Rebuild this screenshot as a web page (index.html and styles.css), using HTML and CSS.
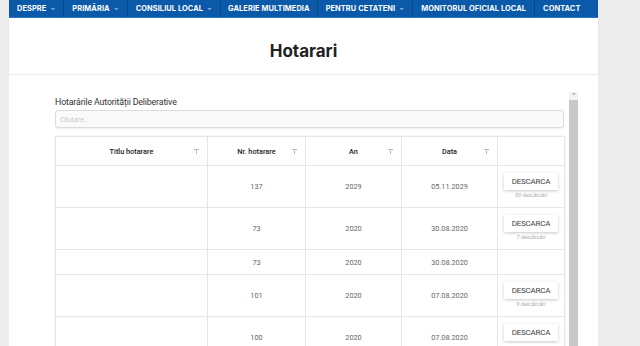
FILE: index.html
```html
<!DOCTYPE html>
<html lang="ro">
<head>
  <meta charset="UTF-8">
  <meta name="viewport" content="width=device-width, initial-scale=1.0">
  <title>Hotarari</title>
  <link rel="stylesheet" href="styles.css">
</head>
<body>
  <div class="page">
    <nav class="topnav">
      <a href="#" class="nav-item">DESPRE <span class="caret">&#8964;</span></a>
      <a href="#" class="nav-item">PRIMĂRIA <span class="caret">&#8964;</span></a>
      <a href="#" class="nav-item">CONSILIUL LOCAL <span class="caret">&#8964;</span></a>
      <a href="#" class="nav-item">GALERIE MULTIMEDIA</a>
      <a href="#" class="nav-item">PENTRU CETATENI <span class="caret">&#8964;</span></a>
      <a href="#" class="nav-item">MONITORUL OFICIAL LOCAL</a>
      <a href="#" class="nav-item">CONTACT</a>
    </nav>

    <header class="page-head">
      <h1>Hotarari</h1>
    </header>

    <section class="content">
      <div class="panel">
        <div class="panel-title">Hotarârile Autorității Deliberative</div>
        <input class="search" type="text" placeholder="Căutare...">

        <table class="hot-table">
          <thead>
            <tr>
              <th class="c-title">Titlu hotarare <span class="filter"></span></th>
              <th class="c-nr">Nr. hotarare <span class="filter"></span></th>
              <th class="c-an">An <span class="filter"></span></th>
              <th class="c-data">Data <span class="filter"></span></th>
              <th class="c-dl"></th>
            </tr>
          </thead>
          <tbody>
            <tr>
              <td></td><td>137</td><td>2029</td><td>05.11.2029</td>
              <td class="c-dl"><button class="dl-btn">DESCARCA</button><div class="dl-count">59 descărcări</div></td>
            </tr>
            <tr>
              <td></td><td>73</td><td>2020</td><td>30.08.2020</td>
              <td class="c-dl"><button class="dl-btn">DESCARCA</button><div class="dl-count">7 descărcări</div></td>
            </tr>
            <tr class="short">
              <td></td><td>73</td><td>2020</td><td>30.08.2020</td>
              <td class="c-dl"></td>
            </tr>
            <tr>
              <td></td><td>101</td><td>2020</td><td>07.08.2020</td>
              <td class="c-dl"><button class="dl-btn">DESCARCA</button><div class="dl-count">9 descărcări</div></td>
            </tr>
            <tr>
              <td></td><td>100</td><td>2020</td><td>07.08.2020</td>
              <td class="c-dl"><button class="dl-btn">DESCARCA</button></td>
            </tr>
          </tbody>
        </table>
      </div>
      <div class="scrollbar">
        <div class="scroll-arrow">&#8963;</div>
        <div class="scroll-thumb"></div>
      </div>
    </section>
  </div>
</body>
</html>
```

FILE: styles.css
```css
* {
  margin: 0;
  padding: 0;
  box-sizing: border-box;
}

body {
  font-family: "Roboto", "Liberation Sans", sans-serif;
  background-color: #ececec;
  height: 346px;
  overflow: hidden;
  color: #333;
}

.page {
  width: 589px;
  margin-left: 9px;
  background-color: #fff;
  min-height: 346px;
}

/* top navigation */
.topnav {
  display: flex;
  height: 18px;
  background-color: #0b5aa9;
  border-bottom: 1px solid #2a75c2;
}

.nav-item {
  display: flex;
  align-items: center;
  padding: 0 8px;
  color: #fff;
  text-decoration: none;
  font-family: "Inter", "DejaVu Sans", sans-serif;
  font-size: 7.4px;
  font-weight: 700;
  letter-spacing: 0.1px;
  border-right: 1px solid #0a4788;
  white-space: nowrap;
}

.nav-item:nth-child(4) {
  padding: 0 7px;
}

.nav-item:last-child {
  border-right: none;
}

.caret {
  font-size: 6px;
  color: #b9d2ee;
  margin-left: 4px;
  position: relative;
  top: -1px;
}

/* page title */
.page-head {
  height: 57px;
  display: flex;
  align-items: center;
  justify-content: center;
  border-bottom: 1px solid #ececec;
  box-shadow: 0 1px 2px rgba(0, 0, 0, 0.03);
}

.page-head h1 {
  font-family: "Inter", "DejaVu Sans", sans-serif;
  font-size: 17px;
  font-weight: 700;
  color: #222;
  padding-top: 10px;
}

/* content */
.content {
  display: flex;
  padding-top: 17px;
  padding-left: 46px;
}

.panel {
  width: 509px;
  padding-top: 3px;
}

.panel-title {
  font-family: "Roboto", "Liberation Sans", sans-serif;
  font-size: 8.8px;
  letter-spacing: -0.15px;
  color: #333;
  height: 15px;
  line-height: 14px;
}

.search {
  display: block;
  width: 509px;
  height: 18px;
  border: 1px solid #dcdcdc;
  border-radius: 3px;
  padding: 0 4px;
  font-family: "Open Sans", "Liberation Sans", sans-serif;
  font-size: 6.5px;
  background-color: #fafafa;
  box-shadow: 0 1px 1px rgba(0, 0, 0, 0.05);
}

.search::placeholder {
  color: #c4c4c4;
}

.hot-table {
  margin-top: 8px;
  width: 509px;
  border-collapse: collapse;
  table-layout: fixed;
  box-shadow: 0 0 2px rgba(0, 0, 0, 0.08);
}

.hot-table th,
.hot-table td {
  border: 1px solid #e6e6e6;
  text-align: center;
  font-size: 7.3px;
}

.hot-table th {
  height: 29px;
  font-weight: 500;
  color: #222;
  position: relative;
}

.hot-table td {
  height: 42px;
  color: #666;
}

.hot-table tr.short td {
  height: 25px;
}

.c-title { width: 152px; }
.c-nr { width: 98px; }
.c-an { width: 96px; }
.c-data { width: 96px; }
.c-dl { width: 67px; }

.filter {
  position: absolute;
  right: 8px;
  top: 12px;
  width: 5px;
  height: 5px;
  border-top: 1px solid #bbb;
}

.filter::after {
  content: '';
  position: absolute;
  left: 2px;
  top: 0;
  width: 1px;
  height: 4px;
  background-color: #bbb;
}

.hot-table td.c-dl {
  vertical-align: top;
  padding-top: 7px;
}

.dl-btn {
  display: block;
  margin: 0 auto;
  width: 54px;
  height: 17px;
  border: none;
  background-color: #fff;
  box-shadow: 0 1px 3px rgba(0, 0, 0, 0.22);
  font-family: "Roboto", "Liberation Sans", sans-serif;
  font-size: 8px;
  color: #444;
  letter-spacing: -0.2px;
}

.dl-count {
  font-size: 5.5px;
  font-style: italic;
  color: #aaa;
  margin-top: 2px;
}

/* fake scrollbar */
.scrollbar {
  margin-left: 5px;
  width: 9px;
  height: 260px;
  display: flex;
  flex-direction: column;
}

.scroll-arrow {
  height: 8px;
  font-size: 7px;
  line-height: 9px;
  text-align: center;
  color: #777;
  background-color: #f1f1f1;
}

.scroll-thumb {
  flex: 1;
  background-color: #c8c8c8;
}
```
